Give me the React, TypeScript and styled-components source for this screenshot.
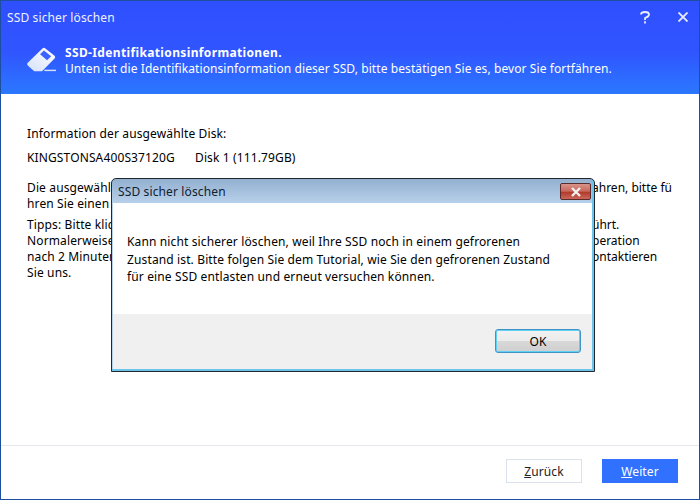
import React from 'react';
import styled, { createGlobalStyle } from 'styled-components';

const GlobalStyle = createGlobalStyle`
  html, body {
    margin: 0;
    padding: 0;
    background: #fff;
  }
  body {
    font-family: "Noto Sans", "DejaVu Sans", sans-serif;
    font-size: 12px;
    letter-spacing: 0.13px;
  }
`;

const Window = styled.div`
  position: relative;
  box-sizing: border-box;
  width: 700px;
  height: 500px;
  display: flex;
  flex-direction: column;
  border: 1px solid #1d4f9f;
  background: #fff;
  overflow: hidden;
`;

const Header = styled.header`
  height: 93px;
  flex: none;
  display: flex;
  flex-direction: column;
  background: linear-gradient(180deg, #2f4fff 0%, #3055ff 55%, #2b78ff 100%);
  color: #fff;
`;

const TitleRow = styled.div`
  height: 32px;
  flex: none;
  display: flex;
  align-items: center;
  justify-content: space-between;
  padding: 0 11px 0 6px;
  color: #eef2ff;
`;

const TitleActions = styled.div`
  display: flex;
  align-items: center;
  gap: 28px;
`;

const HeadRow = styled.div`
  display: flex;
  align-items: flex-start;
  padding: 13px 0 0 25px;
  gap: 8px;
`;

const HeadText = styled.div`
  line-height: 16px;
  margin-top: -1px;
  letter-spacing: 0.09px;
`;

const HeadTitle = styled.div`
  font-weight: 700;
  letter-spacing: 0.36px;
`;

const Content = styled.main`
  flex: 1;
  padding: 32px 0 0 26px;
  color: #000;
  line-height: 16px;
`;

const Line = styled.div<{ $gap?: number }>`
  white-space: nowrap;
  margin-top: ${(p) => p.$gap ?? 0}px;
`;

// the dialog covers the middle of these lines, only the two ends show
const SplitLine = styled.div<{ $gap?: number }>`
  display: grid;
  grid-template-columns: 84px 484px auto;
  white-space: nowrap;
  margin-top: ${(p) => p.$gap ?? 0}px;
`;

const LeftEnd = styled.span`
  grid-column: 1;
`;

const RightEnd = styled.span`
  grid-column: 3;
  margin-left: -3px;
  letter-spacing: 0;
`;

const DiskName = styled.span`
  display: inline-block;
  width: 168px;
`;

const Footer = styled.footer`
  height: 54px;
  flex: none;
  box-sizing: border-box;
  border-top: 1px solid #e4e7ee;
  display: flex;
  justify-content: flex-end;
  align-items: flex-start;
  gap: 20px;
  padding: 13px 21px 0 0;
`;

const NavButton = styled.button<{ $primary?: boolean }>`
  width: 76px;
  height: 24px;
  padding: 0;
  font: inherit;
  letter-spacing: inherit;
  color: ${(p) => (p.$primary ? '#fff' : '#222')};
  background: ${(p) => (p.$primary ? '#3072ff' : '#fff')};
  border: 1px solid ${(p) => (p.$primary ? '#3072ff' : '#dce2ec')};
`;

const Dialog = styled.section`
  position: absolute;
  left: 110px;
  top: 177px;
  box-sizing: border-box;
  width: 484px;
  height: 194px;
  display: flex;
  flex-direction: column;
  border: 1px solid #23282e;
  border-radius: 5px 5px 0 0;
  background: linear-gradient(180deg, #93b0d0 0%, #b7d0ea 24px, #b7d0ea 100%);
  padding: 0 1px 1px 1px;
  box-shadow: inset -2px -2px 0 #6cc4ea;
`;

const DialogBar = styled.div`
  height: 24px;
  flex: none;
  display: flex;
  align-items: center;
  justify-content: space-between;
  padding: 0 2px 0 5px;
  color: #10202e;
`;

const DialogTitle = styled.span`
  margin-top: 1px;
`;

const CloseButton = styled.div`
  width: 31px;
  height: 17px;
  margin-top: 1px;
  box-sizing: border-box;
  border: 1px solid #5b2a2a;
  border-radius: 2px;
  background: linear-gradient(180deg, #d9938a 0%, #c8685c 48%, #b23a2a 55%, #c9685a 100%);
  display: flex;
  align-items: center;
  justify-content: center;
`;

const DialogBody = styled.div`
  height: 111px;
  flex: none;
  box-sizing: border-box;
  margin-right: 1px;
  background: #fff;
  padding: 30px 14px 0 14px;
  line-height: 17.5px;
  color: #000;
`;

const DialogFoot = styled.div`
  flex: 1;
  margin: 0 1px 1px 0;
  background: #f0f0f0;
  display: flex;
  justify-content: flex-end;
  align-items: flex-start;
  padding: 15px 11px 0 0;
`;

const OkButton = styled.button`
  width: 86px;
  height: 24px;
  padding: 0;
  font: inherit;
  letter-spacing: inherit;
  color: #000;
  border: 1px solid #3f93c6;
  border-radius: 3px;
  box-shadow: inset 0 0 0 1px #60d0f4;
  background: linear-gradient(180deg, #f2f2f2 0%, #ebebeb 50%, #d8d8d8 52%, #cfcfcf 100%);
`;

const Mnemonic = styled.span`
  text-decoration: underline;
`;

const EraserIcon = () => (
  <svg width="31" height="29" viewBox="0 0 32 30">
    <defs>
      <linearGradient id="eraser" x1="0" y1="1" x2="1" y2="0">
        <stop offset="0" stopColor="#d5e0fb" />
        <stop offset="1" stopColor="#ffffff" />
      </linearGradient>
    </defs>
    <path
      d="M1.5 17.5 L17 2.5 Q18.5 1 20 2.5 L29.5 10 Q31 11.5 29.5 13 L16.5 26 L8.5 26 L2 20.5 Q0.5 18.5 1.5 17.5 Z"
      fill="url(#eraser)"
    />
    <path d="M14.5 8.5 L18.5 4.7 L26 10.6 L21.8 14.7 Z" fill="#3a63ff" />
    <rect x="19" y="24.5" width="12" height="1.5" fill="#d5e0fb" />
  </svg>
);

const App = () => (
  <>
    <GlobalStyle />
    <Window>
      <Header>
        <TitleRow>
          <span>SSD sicher löschen</span>
          <TitleActions>
            <svg width="10" height="13" viewBox="0 0 10 13" fill="none" stroke="#e8eeff" strokeWidth="1.8">
              <path d="M1 3.5 Q1 1 5 1 Q9 1 9 3.5 Q9 5.5 5 7 L5 9" />
              <path d="M5 10.2 L5 12.6" />
            </svg>
            <svg width="10" height="10" viewBox="0 0 10 10" fill="none" stroke="#e8eeff" strokeWidth="1.8">
              <path d="M0.5 0.5 L9.5 9.5 M9.5 0.5 L0.5 9.5" />
            </svg>
          </TitleActions>
        </TitleRow>
        <HeadRow>
          <EraserIcon />
          <HeadText>
            <HeadTitle>SSD-Identifikationsinformationen.</HeadTitle>
            <div>Unten ist die Identifikationsinformation dieser SSD, bitte bestätigen Sie es, bevor Sie fortfähren.</div>
          </HeadText>
        </HeadRow>
      </Header>
      <Content>
        <Line>Information der ausgewählte Disk:</Line>
        <Line $gap={8}>
          <DiskName>KINGSTONSA400S37120G</DiskName>Disk 1 (111.79GB)
        </Line>
        <SplitLine $gap={14}>
          <LeftEnd>Die ausgewählt</LeftEnd>
          <RightEnd>ahren, bitte fü</RightEnd>
        </SplitLine>
        <SplitLine>
          <LeftEnd>hren Sie einen</LeftEnd>
        </SplitLine>
        <SplitLine $gap={5}>
          <LeftEnd>Tipps: Bitte klic</LeftEnd>
          <RightEnd>ührt.</RightEnd>
        </SplitLine>
        <SplitLine>
          <LeftEnd>Normalerweise</LeftEnd>
          <RightEnd>peration</RightEnd>
        </SplitLine>
        <SplitLine>
          <LeftEnd>nach 2 Minuten</LeftEnd>
          <RightEnd>ontaktieren</RightEnd>
        </SplitLine>
        <Line>Sie uns.</Line>
      </Content>
      <Footer>
        <NavButton><Mnemonic>Z</Mnemonic>urück</NavButton>
        <NavButton $primary><Mnemonic>W</Mnemonic>eiter</NavButton>
      </Footer>
      <Dialog>
        <DialogBar>
          <DialogTitle>SSD sicher löschen</DialogTitle>
          <CloseButton>
            <svg width="12" height="10" viewBox="0 0 12 10" fill="none" stroke="#f2f2f2" strokeWidth="2.4">
              <path d="M2 1 L10 9 M10 1 L2 9" />
            </svg>
          </CloseButton>
        </DialogBar>
        <DialogBody>
          Kann nicht sicherer löschen, weil Ihre SSD noch in einem gefrorenen<br />
          Zustand ist. Bitte folgen Sie dem Tutorial, wie Sie den gefrorenen Zustand<br />
          für eine SSD entlasten und erneut versuchen können.
        </DialogBody>
        <DialogFoot>
          <OkButton>OK</OkButton>
        </DialogFoot>
      </Dialog>
    </Window>
  </>
);

export default App;
